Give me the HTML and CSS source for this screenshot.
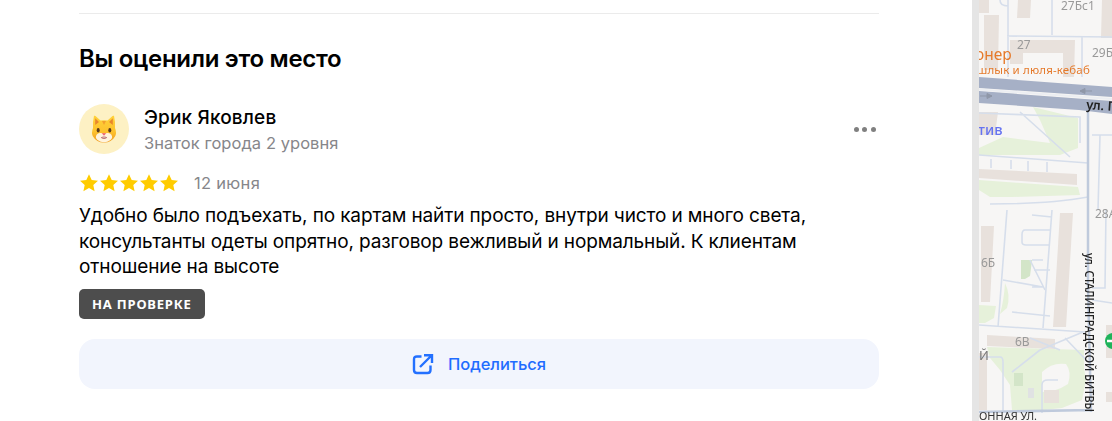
FILE: index.html
```html
<!DOCTYPE html>
<html lang="ru">
<head>
<meta charset="utf-8">
<title>Вы оценили это место</title>
<link rel="stylesheet" href="styles.css">
</head>
<body>
<div class="page">
  <main class="panel">
    <div class="content">
      <hr class="divider">
      <h2 class="title">Вы оценили это место</h2>
      <div class="author">
        <div class="avatar">
          <svg class="cat" viewBox="0 0 26 28" width="26" height="28">
            <defs>
              <linearGradient id="fur" x1="0" y1="0" x2="0" y2="1">
                <stop offset="0" stop-color="#ffd23a"/>
                <stop offset=".6" stop-color="#fdc22e"/>
                <stop offset="1" stop-color="#f09a1e"/>
              </linearGradient>
            </defs>
            <path d="M3 .8 Q3.6 .4 4.5 1 L9.5 5.6 Q13 4.9 16.5 5.6 L21.5 1 Q22.4 .4 23 .8 Q24.4 7 24 13 Q26 18 24 21.5 Q20.5 27.6 13 27.6 Q5.5 27.6 2 21.5 Q0 18 2 13 Q1.6 7 3 .8Z" fill="url(#fur)"/>
            <path d="M4.2 3.2 L8 7 L4.2 10Z M21.8 3.2 L18 7 L21.8 10Z" fill="#e8862e"/>
            <path d="M11 6 L13 10 L15 6Z" fill="#f2a02c"/>
            <path d="M13 19 Q9 16.8 5.8 19.5 Q3.6 22.5 6.5 25 Q9.5 27.2 13 27.2 Q16.5 27.2 19.5 25 Q22.4 22.5 20.2 19.5 Q17 16.8 13 19Z" fill="#fff4de"/>
            <ellipse cx="7.2" cy="15.2" rx="1.5" ry="2.2" fill="#5a3a1c"/>
            <ellipse cx="18.8" cy="15.2" rx="1.5" ry="2.2" fill="#5a3a1c"/>
            <path d="M10.8 18.2 H15.2 L13 20.8Z" fill="#ee5f7a"/>
            <path d="M9.8 22.8 Q13 20 16.2 22.8 Q13 24.6 9.8 22.8Z" fill="#a8494e"/>
            <path d="M10.6 22.4 Q13 21 15.4 22.4Z" fill="#fff"/>
          </svg>
        </div>
        <div class="author-info">
          <div class="author-name">Эрик Яковлев</div>
          <div class="author-level">Знаток города 2 уровня</div>
        </div>
        <div class="more"><i></i><i></i><i></i></div>
      </div>
      <div class="meta">
        <div class="stars">
          <svg viewBox="0 0 20 20" width="20" height="20"><use href="#star"/></svg>
          <svg viewBox="0 0 20 20" width="20" height="20"><use href="#star"/></svg>
          <svg viewBox="0 0 20 20" width="20" height="20"><use href="#star"/></svg>
          <svg viewBox="0 0 20 20" width="20" height="20"><use href="#star"/></svg>
          <svg viewBox="0 0 20 20" width="20" height="20"><use href="#star"/></svg>
        </div>
        <span class="date">12 июня</span>
      </div>
      <p class="text">Удобно было подъехать, по картам найти просто, внутри чисто и много света, консультанты одеты опрятно, разговор вежливый и нормальный. К клиентам отношение на высоте</p>
      <span class="badge">НА ПРОВЕРКЕ</span>
      <button class="share" type="button">
        <svg viewBox="0 0 22 22" width="22" height="22" fill="none" stroke="#2370ff" stroke-width="2.4">
          <path d="M9.5 3.5 H5 Q2 3.5 2 6.5 V17 Q2 20 5 20 H15.5 Q18.5 20 18.5 17 V12.5"/>
          <path d="M8 14 L19 3 M12 2.2 H20 V10"/>
        </svg>
        <span>Поделиться</span>
      </button>
    </div>
  </main>
  <div class="gutter"></div>
  <aside class="map">
    <svg class="map-art" viewBox="979 0 133 421" width="133" height="421">
      <defs>
        <path id="star" d="M10 1.2 L12.7 7 L19 7.7 L14.3 12 L15.6 18.3 L10 15.1 L4.4 18.3 L5.7 12 L1 7.7 L7.3 7Z" fill="#fc0"/>
      </defs>
      <g class="parks">
        <path d="M1033 107 L1078 118 V148 L1060 155 L979 155 V148 L1003 137 L1050 143 L1040 120Z"/>
        <path d="M979 180 L1078 187 L1080 195 L1012 197 L990 197 L979 190Z"/>
        <path d="M979 305 L996 306 L994 318 L985 323 H979Z"/>
        <path d="M1005 283 Q1011 295 1007 308 L1000 314 Q1004 300 1005 283Z"/>
        <path d="M987 347 L1084 350 V368 L1086 380 L1082 400 L1062 408 L1043 410 H1012 L1010 385 L1000 370 L990 358Z"/>
      </g>
      <path class="blob" d="M1042 372 Q1052 362 1066 364 Q1072 372 1068 384 Q1056 392 1042 392Z"/>
      <path class="pond" d="M1021 260 H1032 L1030 276 L1025 279 H1021Z"/>
      <rect class="pond" x="1014" y="373" width="9" height="13"/>
      <rect class="grey" x="1028" y="388" width="6" height="10"/>
      <g class="bld">
        <path d="M979 0 H989 V13 H979Z"/>
        <path d="M984 15 H999 L998 70 H984Z"/>
        <path d="M1018 0 H1031 L1030 18 H1017Z"/>
        <path d="M1010 40 H1075 L1074 77 H1063 V53 H1023 V64 H1010Z"/>
        <path d="M1102 0 H1112 V38 H1101Z"/>
        <path d="M979 112 H998 L995 135 H979Z"/>
        <path d="M979 169 L1077 174 V185 L979 178Z"/>
        <path d="M981 226 H994 L990 302 H981Z"/>
        <path d="M1060 213 H1073 L1066 327 H1053Z"/>
        <path d="M987 335 L1055 339 V349 L987 346Z"/>
        <path d="M979 353 H987 V410 H979Z"/>
        <path d="M1044 390 H1059 V403 H1044Z"/>
        <path d="M1106 325 H1112 V358 H1106Z"/>
        <path d="M1106 392 H1112 V402 H1106Z"/>
      </g>
      <g class="lanes">
        <path d="M1008 0 V77 M1052 0 V35 M1007 36 L1112 37 M1082 36 V77 M1000 0 Q1000 6 1008 6"/>
        <path d="M979 113 L1080 117 V143 M1020 112 L1070 157 M1092 135 H1112"/>
        <path d="M979 155 L1088 163 M991 159 V168 M1011 160 V169 M1028 161 V171 M1047 162 V172"/>
        <path d="M990 204 Q1050 204 1088 197 M1007 210 L998 327 M1052 210 L1043 328 M979 325 L1085 332"/>
        <path d="M1050 230 H1025 Q1022 230 1022 235 V242 Q1022 245 1026 245 H1050 M1032 215 L1052 217 M1012 312 L1050 316 M1003 280 L1043 287 M1030 260 L1045 290 M1032 260 H1043 M1034 270 H1050 M1032 287 H1043"/>
        <path d="M1106 210 L1105 288 H1092 M1092 300 L1112 303 M1100 135 L1098 210"/>
        <path d="M979 357 H1000 Q1003 357 1003 362 V413 M1042 413 V385 Q1042 380 1048 380 H1058 M1083 332 L1040 350 M1030 338 L1060 350 M1012 372 L1040 350 M1065 338 L1088 362"/>
      </g>
      <path class="lane-strong" d="M1088 110 V286 L1091 412 M979 412 L1091 410"/>
      <path class="road" d="M979 77 L1112 87 V97 L979 88Z"/>
      <path class="road" d="M979 91 L1112 101 V114 L1079 110 L979 103Z"/>
      <path class="road-line" d="M979 89.5 L1112 99"/>
      <path class="road-arrow" d="M1080 91 H1092 M1080 91 L1085 88.5 V93.5Z M992 96 H980 M992 96 L987 93.5 V98.5Z"/>
      <text class="lbl" x="1061" y="10">27Бс1</text>
      <text class="lbl" x="1017" y="49">27</text>
      <text class="lbl" x="1092" y="57">29Б</text>
      <text class="lbl" x="1095" y="218">28А</text>
      <text class="lbl" x="981" y="267">6Б</text>
      <text class="lbl" x="1015" y="346">6В</text>
      <text class="poi" x="975" y="60">онер</text>
      <text class="poi-s" x="977" y="74">шлык и люля-кебаб</text>
      <text class="street" transform="translate(1086 109) rotate(4)">ул. Г</text>
      <text class="biz" x="978" y="135">тив</text>
      <text class="lbl-d" x="979" y="360">Й</text>
      <text class="street-s" x="979" y="420">ОННАЯ УЛ.</text>
      <text class="street-v" transform="translate(1085 253) rotate(90)" textLength="159" lengthAdjust="spacingAndGlyphs">ул. СТАЛИНГРАДСКОЙ БИТВЫ</text>
      <circle cx="1113" cy="341" r="8" fill="#1fb35b"/>
      <path d="M1107 341 H1112" stroke="#fff" stroke-width="2.5"/>
    </svg>
  </aside>
</div>
</body>
</html>
```
FILE: styles.css
```css
* { box-sizing: border-box; }
html, body { margin: 0; height: 100%; }
body { background: #fff; font-family: Inter, "Noto Sans", sans-serif; color: #000; overflow: hidden; }
.page { display: flex; width: 1112px; height: 421px; }
.panel { width: 972px; flex: none; padding-left: 79px; }
.content { width: 800px; display: flex; flex-direction: column; align-items: flex-start; }
.divider { width: 100%; height: 1px; margin: 13px 0 0; border: 0; background: #ebebeb; }
.title { margin: 30px 0 0; font-size: 24px; line-height: 29px; font-weight: 600; letter-spacing: -0.3px; }
.author { width: 100%; margin-top: 31px; display: flex; align-items: center; }
.avatar { width: 50px; height: 50px; border-radius: 50%; background: #fdf1c4; display: flex; align-items: center; justify-content: center; flex: none; }
.author-info { margin-left: 15px; flex: 1; padding-top: 1px; }
.author-name { font-size: 19px; line-height: 24px; font-weight: 500; letter-spacing: 0.15px; }
.author-level { font-size: 16.5px; line-height: 22px; margin-top: 2px; color: #86868a; letter-spacing: 0.05px; }
.more { display: flex; gap: 3.7px; margin-right: 3px; }
.more i { width: 5px; height: 5px; border-radius: 50%; background: #808080; }
.meta { margin-top: 17px; display: flex; align-items: center; height: 24px; }
.stars { display: flex; }
.stars svg { display: block; }
.date { margin-left: 15px; font-size: 16.5px; color: #86868a; letter-spacing: .3px; }
.text { margin: 8px 0 0; font-size: 19px; line-height: 25.5px; width: 800px; letter-spacing: -0.12px; }
.badge { margin-top: 9px; height: 30px; padding: 0 13px; background: #4d4d4d; border-radius: 5px; color: #fff; font-family: "Noto Sans", sans-serif; font-size: 13px; font-weight: 700; line-height: 30px; letter-spacing: .8px; }
.share { margin-top: 20px; width: 100%; height: 50px; border: 0; border-radius: 16px; background: #f2f5fd; color: #1f6cff; font: 500 16.5px Inter, sans-serif; letter-spacing: -0.05px; display: flex; align-items: center; justify-content: center; gap: 14px; padding: 0; }
.gutter { width: 7px; flex: none; background: #e5e5e5; }
.map { width: 133px; flex: none; background: #f7f6f5; overflow: hidden; }
.map-art { display: block; filter: blur(.4px); }
.map-art text { font-family: "Noto Sans", sans-serif; }
.parks path { fill: #e6f1da; }
.blob { fill: #f7f6f5; }
.pond { fill: #d3e5c8; }
.grey { fill: #e0e2e3; }
.bld path { fill: #e8e1dc; }
.lanes path { fill: none; stroke: #d6deeb; stroke-width: 1.6; }
.lane-strong { fill: none; stroke: #bfcadc; stroke-width: 2.5; }
.road { fill: #a6b0c6; }
.road-line { stroke: #eceef2; stroke-width: 2; fill: none; }
.road-arrow { stroke: #8f97a8; fill: #8f97a8; stroke-width: 1; }
.lbl { font-size: 12px; fill: #999; }
.lbl-d { font-size: 13px; fill: #777; }
.poi { font-size: 15.5px; fill: #e57a2b; }
.poi-s { font-size: 11.5px; letter-spacing: .15px; fill: #e57a2b; }
.biz { font-size: 14.5px; font-weight: 500; fill: #6673f0; }
.street { font-size: 13px; font-weight: 600; fill: #222; }
.street-s { font-size: 11px; fill: #333; }
.street-v { font-size: 12.5px; font-weight: 500; fill: #222; }
```
